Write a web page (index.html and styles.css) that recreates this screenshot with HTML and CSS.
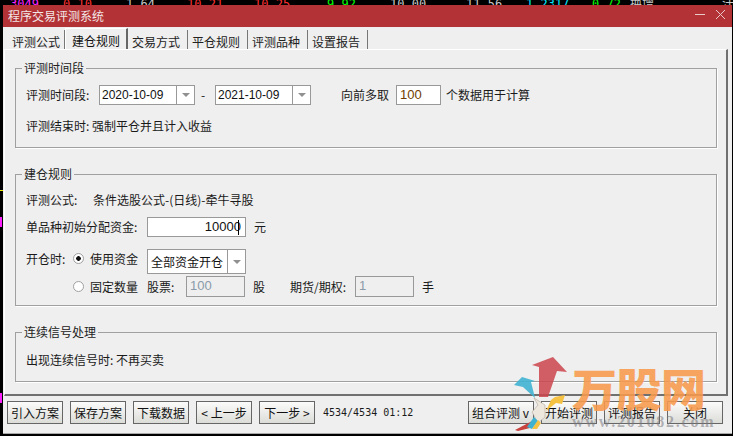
FILE: index.html
```html
<!DOCTYPE html>
<html lang="zh">
<head>
<meta charset="utf-8">
<title>程序交易评测系统</title>
<link rel="stylesheet" href="styles.css">
</head>
<body>
<div class="ticker">
  <span class="t-magenta">3049</span>
  <span class="t-red">0.10</span>
  <span class="t-white">1.64</span>
  <span class="t-red">10.21</span>
  <span class="t-red">10.25</span>
  <span class="t-green">9.92</span>
  <span class="t-white">10.00</span>
  <span class="t-white">11.56</span>
  <span class="t-cyan">1.2317</span>
  <span class="t-green">0.72</span>
  <span class="t-white">换增</span>
  <span class="t-white">汁</span>
</div>
<i class="mark mark-yellow"></i>
<i class="mark mark-magenta-a"></i>
<i class="mark mark-magenta-b"></i>

<div class="window">
  <header class="titlebar">
    <span>程序交易评测系统</span>
    <div class="winctl">
      <svg width="11" height="11" viewBox="0 0 11 11"><path d="M0 5.5H10" stroke="#e8c8c8" fill="none"/></svg>
      <svg width="11" height="11" viewBox="0 0 11 11"><path d="M1 1L10 10M10 1L1 10" stroke="#e8c8c8" fill="none"/></svg>
    </div>
  </header>

  <nav class="tabs">
    <span class="tab tab-first">评测公式</span>
    <span class="tab tab-active">建仓规则</span>
    <span class="tab">交易方式</span>
    <span class="tab">平仓规则</span>
    <span class="tab">评测品种</span>
    <span class="tab">设置报告</span>
  </nav>

  <main class="panel">
    <fieldset class="group group-time">
      <legend>评测时间段</legend>
      <div class="row">
        <span class="lbl-time">评测时间段:</span>
        <div class="combo combo-date"><span class="combo-val">2020-10-09</span><span class="combo-btn"><i class="arrow"></i></span></div>
        <span class="dash">-</span>
        <div class="combo combo-date"><span class="combo-val">2021-10-09</span><span class="combo-btn"><i class="arrow"></i></span></div>
        <span class="lbl-prior">向前多取</span>
        <div class="input input-prior">100</div>
        <span class="lbl-calc">个数据用于计算</span>
      </div>
      <p class="line line-end">评测结束时: 强制平仓并且计入收益</p>
    </fieldset>

    <fieldset class="group group-rule">
      <legend>建仓规则</legend>
      <div class="row">
        <span class="lbl-formula">评测公式:</span>
        <span>条件选股公式-(日线)-牵牛寻股</span>
      </div>
      <div class="row row-capital">
        <span class="lbl-wide">单品种初始分配资金:</span>
        <div class="input input-capital">10000<i class="caret"></i></div>
        <span class="unit">元</span>
      </div>
      <div class="row row-open">
        <span class="lbl-open raised">开仓时:</span>
        <span class="radio radio-on raised"></span>
        <span class="lbl-radio raised">使用资金</span>
        <div class="combo combo-mode"><span class="combo-val">全部资金开仓</span><span class="combo-btn"><i class="arrow"></i></span></div>
      </div>
      <div class="row row-fixed">
        <span class="radio radio-off"></span>
        <span class="lbl-radio">固定数量</span>
        <span class="lbl-stock">股票:</span>
        <div class="input input-off input-stock">100</div>
        <span class="unit">股</span>
        <span class="lbl-future">期货/期权:</span>
        <div class="input input-off input-future">1</div>
        <span class="unit">手</span>
      </div>
    </fieldset>

    <fieldset class="group group-signal">
      <legend>连续信号处理</legend>
      <p class="line">出现连续信号时: 不再买卖</p>
    </fieldset>
  </main>

  <footer class="footer">
    <button class="btn">引入方案</button>
    <button class="btn">保存方案</button>
    <button class="btn">下载数据</button>
    <button class="btn">&lt; 上一步</button>
    <button class="btn">下一步 &gt;</button>
    <span class="progress">4534/4534 01:12</span>
    <div class="footer-right">
      <button class="btn btn-wide">组合评测 v</button>
      <button class="btn">开始评测</button>
      <button class="btn">评测报告</button>
      <button class="btn">关闭</button>
    </div>
  </footer>
</div>

<div class="watermark">
  <svg class="wm-logo" width="100" height="80" viewBox="0 0 100 80">
    <path d="M43 0L57 15L47 14L38 40L29 40L29 10L22 8Z" fill="#cb444c" fill-opacity=".85"/>
    <path d="M12 20L25 24L21 25L25 41L13 30L4 28Z" fill="#3fb2d2" fill-opacity=".9"/>
    <path d="M55 38L52 47L46 46L36 54L41 43L45 40Z" fill="#f5c244"/>
    <path d="M24 41L35 48L35 60L28 66L22 55L28 48Z" fill="#eee7de" stroke="#a89a8c" stroke-width=".5"/>
    <path d="M5 73L26 62L20 71L8 74Z" fill="#c8423e"/>
    <path d="M17 70L24 60L28 64L22 72Z" fill="#3fb2d2"/>
    <path d="M22 72L28 63L31 66L27 72Z" fill="#f5c244"/>
  </svg>
  <span class="wm-name">万股网</span>
  <span class="wm-url">www.201082.com</span>
</div>
</body>
</html>
```

FILE: styles.css
```css
* { box-sizing: border-box; }

html, body {
  margin: 0;
  height: 436px;
  overflow: hidden;
}

body {
  position: relative;
  width: 733px;
  background: #000;
  font: 12px/16px "Noto Sans CJK SC", "Noto Sans", sans-serif;
  color: #1a1a1a;
}

/* Market figures behind the dialog */
.ticker {
  position: absolute;
  top: 0;
  left: 0;
  width: 733px;
  height: 5px;
  overflow: hidden;
  display: grid;
  grid-template-columns: 53px 63px 61px 67px 73px 63px 76px 60px 66px 38px 92px 20px;
  padding-left: 10px;
  font: 12px/9px "DejaVu Sans Mono", "Noto Sans CJK SC", monospace;
}
.t-magenta { color: #ff20ff; }
.t-red { color: #ff3030; }
.t-white { color: #c8c8c8; }
.t-green { color: #00ff00; }
.t-cyan { color: #00e8ff; }

.mark { position: absolute; left: 0; }
.mark-yellow { top: 190px; width: 3px; height: 1px; background: #e8e800; }
.mark-magenta-a { top: 217px; width: 2px; height: 10px; background: #ff20ff; }
.mark-magenta-b { top: 393px; width: 2px; height: 10px; background: #ff20ff; }

/* Dialog */
.window {
  position: absolute;
  top: 5px;
  left: 3px;
  width: 729px;
  height: 429px;
  display: flex;
  flex-direction: column;
  background: #efefef;
  border-bottom: 1px solid #a8a8a8;
}

.titlebar {
  flex: none;
  height: 22px;
  display: flex;
  align-items: center;
  justify-content: space-between;
  padding: 0 5px;
  background: #b23235;
  color: #f2e6e6;
}
.winctl {
  display: flex;
  gap: 9px;
  margin-top: -3px;
  padding-right: 1px;
}

/* Tabs */
.tabs {
  flex: none;
  height: 22px;
  display: flex;
  align-items: flex-end;
  padding-left: 3px;
}
.tab {
  width: 60px;
  height: 19px;
  padding: 4px 0 0 4px;
  border-right: 1px solid #777;
  color: #222;
  white-space: nowrap;
}
.tab-first { width: 59px; padding-left: 6px; }
.tab-active {
  width: 63px;
  height: 21px;
  padding: 4px 0 0 6px;
  border-top: 1px solid #fff;
  border-left: 1px solid #fff;
  border-right: 2px solid #666;
  color: #111;
}

/* Page under the tabs */
.panel {
  flex: none;
  width: 724px;
  height: 347px;
  margin-left: 1px;
  padding: 10px 0 0 10px;
  border-top: 1px solid #fff;
  border-left: 1px solid #fff;
  border-right: 2px solid #707070;
  border-bottom: 2px solid #707070;
}

.group {
  width: 702px;
  margin: 0 0 18px;
  padding: 0 0 0 10px;
  border: 1px solid #a0a0a0;
  box-shadow: 1px 1px 0 #fff;
  min-width: 0;
}
.group legend {
  margin-left: -4px;
  padding: 0 2px;
  line-height: 16px;
  color: #222;
}
.group-time { padding-top: 9px; padding-bottom: 13px; }
.group-rule { padding-top: 10px; padding-bottom: 8px; }
.group-signal { padding-top: 12px; padding-bottom: 13px; margin-bottom: 0; }

.row { display: flex; align-items: center; }
.line { margin: 0; }
.line-end { margin-top: 13px; }

/* Form controls */
.combo, .input {
  background: #fff;
  border: 1px solid #999;
  color: #111;
}
.combo { display: flex; align-items: center; flex: none; }
.combo-val { flex: 1; padding-left: 2px; white-space: nowrap; overflow: hidden; }
.combo-btn {
  flex: none;
  width: 18px;
  align-self: stretch;
  display: flex;
  align-items: center;
  justify-content: center;
  border-left: 1px solid #999;
}
.arrow {
  width: 0;
  height: 0;
  border: 4px solid transparent;
  border-top: 4px solid #909090;
  border-bottom: 0;
}
.combo-date { width: 96px; height: 20px; }
.combo-date .combo-val { font: 12px/16px "Liberation Sans", sans-serif; padding-left: 2px; }
.combo-mode { width: 99px; height: 25px; }
.combo-mode .combo-val { padding-left: 3px; }

.input {
  flex: none;
  font: 12px/18px "Liberation Sans", sans-serif;
  padding: 0 3px;
}
.input-prior { width: 45px; height: 20px; font-size: 13px; color: #703c00; }
.input-capital {
  position: relative;
  width: 99px;
  height: 20px;
  text-align: right;
  padding-right: 4px;
  font-size: 13px;
}
.caret {
  position: absolute;
  top: 2px;
  right: 6px;
  width: 1px;
  height: 15px;
  background: #000;
}
.input-off { height: 21px; background: #efefef; color: #8a9aa8; font-size: 13px; padding-left: 3px; }
.input-stock { width: 59px; }
.input-future { width: 59px; }

/* Column widths of the form */
.lbl-time { width: 73px; }
.dash { width: 20px; padding-left: 6px; }
.lbl-prior { margin-left: 30px; width: 55px; }
.lbl-calc { margin-left: 5px; }
.lbl-formula { width: 67px; }
.row-capital { margin-top: 9px; }
.lbl-wide { width: 121px; }
.unit { margin-left: 8px; width: 12px; }
.row-open { margin-top: 12px; }
.row-fixed { margin-top: 2px; padding-left: 47px; }
.lbl-open { width: 47px; }
.lbl-radio { width: 57px; }
.lbl-stock { width: 39px; }
.lbl-future { margin-left: 25px; width: 65px; }
.raised { margin-bottom: 6px; }

.radio {
  flex: none;
  width: 11px;
  height: 11px;
  margin-right: 6px;
  border-radius: 50%;
  background: #fff;
  border: 1px solid #a0a0a0;
}
.radio-on { background: radial-gradient(circle, #111 0 2px, #fff 2.6px); }

/* Footer */
.footer {
  flex: none;
  height: 37px;
  display: flex;
  align-items: flex-start;
  gap: 7px;
  padding: 5px 9px 0 4px;
}
.btn {
  flex: none;
  width: 56px;
  height: 23px;
  margin: 0;
  padding: 0;
  border: 1px solid #666;
  background: linear-gradient(#fbfbfb, #dcdcd8);
  font: 12px/16px "Noto Sans CJK SC", sans-serif;
  color: #111;
  white-space: nowrap;
}
.btn-wide { width: 66px; text-align: left; padding-left: 3px; }
.progress {
  margin-left: 1px;
  line-height: 23px;
  font-family: "DejaVu Sans Mono", monospace;
  font-size: 10px;
  white-space: nowrap;
}
.footer-right { margin-left: auto; display: flex; gap: 7px; }

/* Watermark over the dialog */
.watermark {
  position: absolute;
  left: 510px;
  top: 357px;
  width: 220px;
  height: 79px;
  pointer-events: none;
}
.wm-logo { position: absolute; left: 0; top: 0; }
.wm-name {
  position: absolute;
  left: 62px;
  top: 6px;
  font: 900 45px/50px "Noto Sans CJK SC", sans-serif;
  letter-spacing: -0.500px;
  color: #f79a4c;
  opacity: .88;
  white-space: nowrap;
}
.wm-url {
  position: absolute;
  left: 62px;
  top: 57px;
  font: bold 16px/16px "Liberation Serif", serif;
  letter-spacing: 1.800px;
  color: rgba(120, 120, 125, .55);
  white-space: nowrap;
}
```
